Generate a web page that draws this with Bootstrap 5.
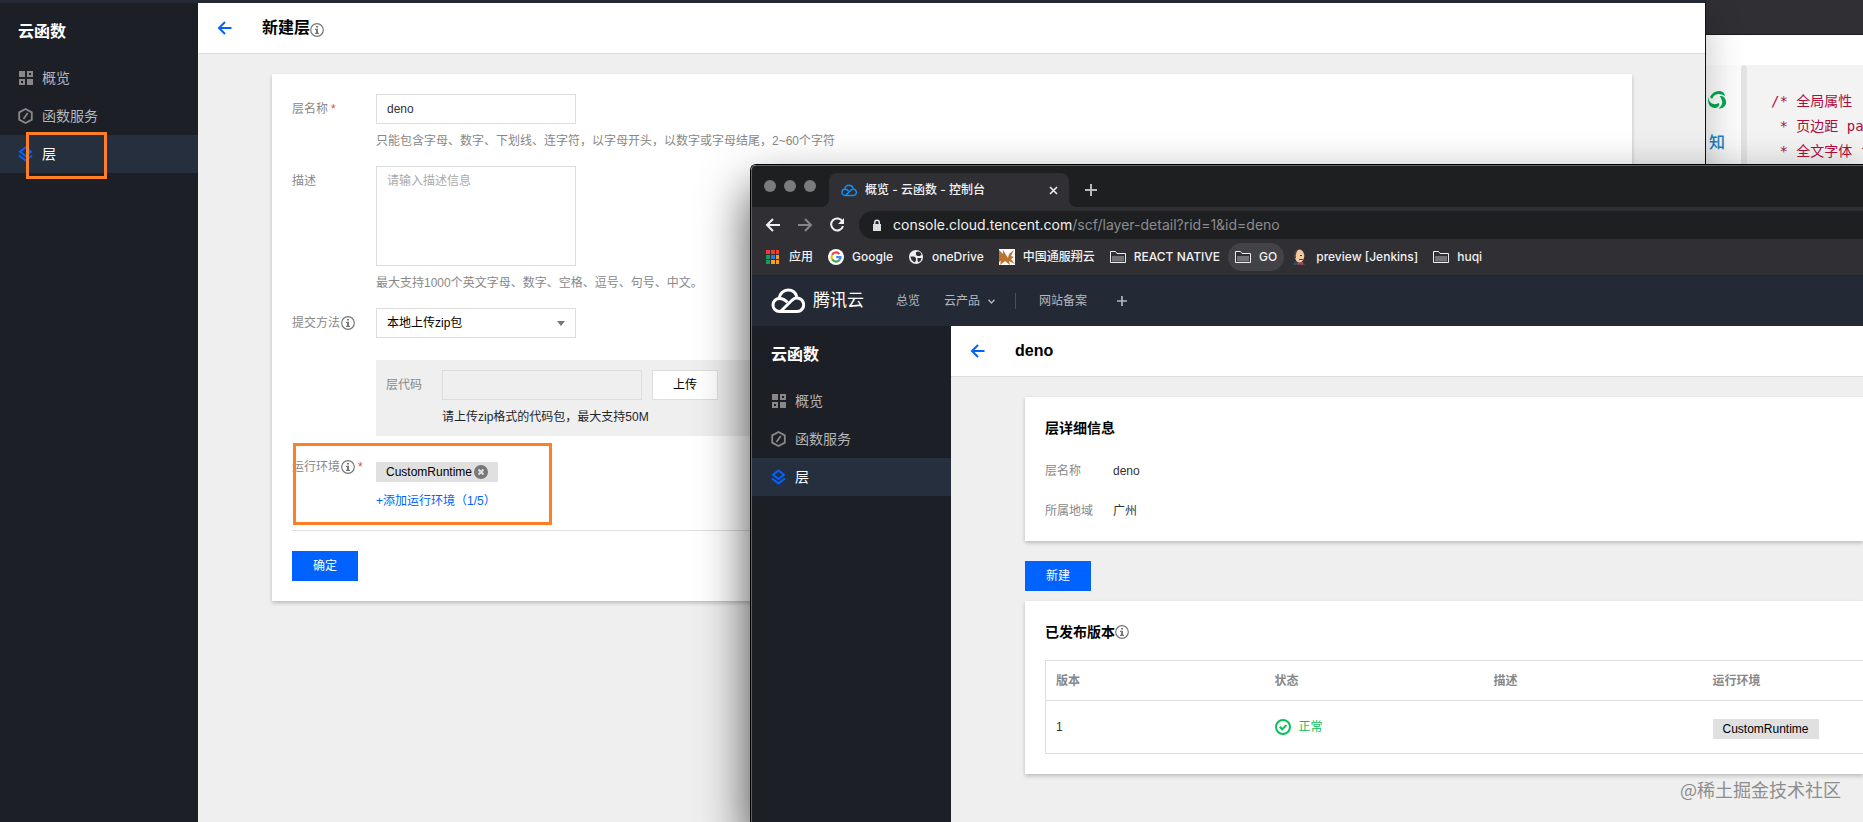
<!DOCTYPE html>
<html lang="zh-CN">
<head>
<meta charset="utf-8">
<meta name="viewport" content="width=device-width, initial-scale=1">
<title>云函数 - 控制台</title>
<link href="https://cdn.jsdelivr.net/npm/bootstrap@5.3.0/dist/css/bootstrap.min.css" rel="stylesheet">
<style>
  body { font: 12px/18px "Liberation Sans", "Noto Sans CJK SC", sans-serif; color: #333; background: #302f34; }
  .desktop { height: 100vh; }
  .win { position: absolute; overflow: hidden; display: flex; flex-direction: column; }
  /* the three windows on the desktop, back to front */
  .win-editor { left: 1706px; right: 0; top: 0; height: 200px; background: #fff; }
  .win-create { left: 0; right: 157px; top: 0; bottom: 0; border-right: 1px solid #111; border-top: 3px solid #232a35; box-shadow: 0 16px 36px rgba(0,0,0,.24); }
  .win-browser { left: 750px; right: 0; top: 164px; bottom: 0; border: solid #000; border-width: 1px 0 0 1px; border-radius: 6px 0 0 0; box-shadow: 0 25px 50px rgba(0,0,0,.72); }
  .rim { border: solid #5f6163; border-width: 1px 0 0 1px; border-radius: 5px 0 0 0; }

  .side { width: 198px; background: #1d1f27; padding-top: 13px; }
  .side h2 { font-size: 16px; line-height: 32px; font-weight: 700; color: #fff; margin: 0 0 11px; padding-left: 18px; }
  .side a { display: flex; align-items: center; gap: 9px; height: 38px; padding-left: 18px; font-size: 14px; color: #b5b6b9; text-decoration: none; }
  .side a.active { background: #262f3e; color: #fff; }
  .side svg { width: 15px; height: 16px; color: #888; }
  .side a.active svg { color: #0063ff; }
  .page { background: #efefef; }
  .page-head { height: 51px; background: #fff; border-bottom: 1px solid #ddd; padding-left: 19px; }
  .page-head h1 { font-size: 16px; line-height: 24px; font-weight: 700; color: #000; margin: 0 0 0 30px; }
  .panel { background: #fff; padding: 20px; box-shadow: 0 2px 4px rgba(0,0,0,.22); }
  .tip { width: 14px; height: 14px; color: #777; flex: none; }
  .lab { width: 84px; flex: none; line-height: 30px; color: #888; }
  .lab .tip { margin-left: 1px; }
  .req { color: #e54545; margin-left: 3px; }
  .box, .box:focus, .box:disabled { width: 200px; height: 30px; padding: 5px 10px; font-size: 12px; line-height: 18px; border: 1px solid #ddd; border-radius: 0; color: #333; background-color: #fff; }
  .box::placeholder { color: #aaa; }
  textarea.box, textarea.box:focus { height: 100px; resize: none; }
  select.box, select.box:focus { color: #000; background-image: url("data:image/svg+xml,%3csvg xmlns='http://www.w3.org/2000/svg' viewBox='0 0 8 5'%3e%3cpath fill='%23777' d='M0 0h8L4 5z'/%3e%3c/svg%3e"); background-size: 8px 5px; background-position: right 10px center; }
  .box:disabled { background-color: #efefef; }
  .help { margin-top: 8px; color: #888; }
  .upload { background: #efefef; padding: 10px; margin: 22px 0 16px 84px; }
  .upload .lab { width: 56px; }
  .act { width: 66px; height: 30px; padding: 0; font-size: 12px; border-radius: 0; border: 1px solid #ddd; background: #fff; color: #000; }
  .act-main { background: #0063ff; border-color: #0063ff; color: #fff; }
  .chip { display: inline-flex; align-items: center; height: 20px; padding: 0 10px; background: #e0e0e0; color: #000; }
  .chip button { border: 0; padding: 0; background: none; display: flex; margin-left: 2px; }
  .blue { color: #0063ff; text-decoration: none; }
  .rule { border-top: 1px solid #ddd; margin: 20px 0; }
  /* marker frames drawn over the form */
  .frame { position: absolute; border: 3px solid #ff7f27; pointer-events: none; }

  .chrome { font-family: Inter, "Noto Sans CJK SC", sans-serif; font-weight: 500; color: #f1f1f2; background: #302f34; }
  .tabs { height: 41px; background: #1e1f21; padding: 7px 0 0 18px; }
  .dot { width: 12px; height: 12px; border-radius: 50%; background: #7b7b7d; }
  .tab { position: relative; width: 240px; height: 34px; background: #302f34; border-radius: 8px 8px 0 0; padding: 0 11px 0 12px; margin-left: 13px; }
  .tab::before, .tab::after { content: ""; position: absolute; bottom: 0; width: 8px; height: 8px; }
  .tab::before { right: 100%; background: radial-gradient(circle at 0 0, transparent 8px, #302f34 8px); }
  .tab::after { left: 100%; background: radial-gradient(circle at 100% 0, transparent 8px, #302f34 8px); }
  .bar { height: 32px; padding: 4px 0 0 13px; }
  .omni { height: 28px; background: #1e1f21; border-radius: 14px 0 0 14px; margin-left: 14px; padding-left: 12px; font-size: 14px; font-weight: 400; }
  .omni .path { color: #8c8c8e; }
  .marks { height: 37px; padding-left: 13px; gap: 15px; border-bottom: 1px solid #252528; }
  .marks a { display: flex; align-items: center; gap: 8px; color: inherit; text-decoration: none; white-space: nowrap; }
  .marks a.hot { height: 28px; border-radius: 14px; background: #434246; padding: 0 7px; margin: 0 -7px; }
  .marks svg { width: 16px; height: 16px; }
  .topnav { height: 50px; background: #232a35; padding-left: 19px; }
  .topnav a { color: #b4b8be; text-decoration: none; }
  .topnav .brand { font-size: 17px; color: #fff; margin-right: 32px; }
  .sep { width: 1px; height: 16px; background: #4a515c; margin: 0 23px 0 20px; }
  .win-browser .side { width: 199px; }
  .win-browser .side h2, .win-browser .side a { padding-left: 19px; }
  .detail { padding: 20px 0 0 74px; }
  .panel h3 { font-size: 14px; line-height: 22px; font-weight: 700; color: #000; margin: 0; }
  .detail dt { width: 68px; font-weight: 400; color: #888; line-height: 20px; }
  .detail dd { margin: 0; line-height: 20px; }
  .versions { table-layout: fixed; width: 100%; border: solid #ddd; border-width: 1px 0 1px 1px; margin-top: 17px; }
  .versions th, .versions td { padding: 0 10px; }
  .versions th { height: 40px; color: #888; border-bottom: 1px solid #ddd; }
  .versions td { height: 53px; }
  .versions .w { width: 219px; }
  .ok { color: #0abf5b; }
  .stamp { position: absolute; right: 22px; bottom: 20px; font: 18px/26px "Noto Sans CJK SC", sans-serif; color: #8d8d8d; }

  .ed-top { height: 35px; background: #302f34; border-bottom: 1px solid #1c1c1e; }
  .ed-links { width: 35px; margin-top: 30px; padding: 26px 0 0 2px; background: #fbfbfb; }
  .ed-links a { color: #1a86c8; font-size: 16px; line-height: 24px; font-weight: 500; margin: 22px 0 0 1px; text-decoration: none; }
  .ed-grip { width: 6px; margin-top: 30px; background: #e3e3e3; border-radius: 3px 3px 0 0; }
  .code { margin: 30px 0 0; padding: 24px 0 0 24px; background: #f3f3f3; color: #b00c3a; font: 14px/25px "DejaVu Sans Mono", "Noto Sans CJK SC", monospace; overflow: hidden; }
</style>
</head>
<body>
<svg class="d-none" xmlns="http://www.w3.org/2000/svg">
  <symbol id="grid" viewBox="0 0 15 16"><path fill="currentColor" d="M1 1h6v6H1zM9 9h6v6H9z"/><path fill="none" stroke="currentColor" stroke-width="2" d="M10 2h4v4h-4zM2 10h4v4H2z"/></symbol>
  <symbol id="hex" viewBox="0 0 15 16"><path fill="none" stroke="currentColor" stroke-width="1.8" d="M7.500 1l6.300 3.400v7.200L7.500 15l-6.300-3.400V4.400z M9.700 5L5.500 11"/></symbol>
  <symbol id="layers" viewBox="0 0 15 16"><path fill="none" stroke="currentColor" stroke-width="2" d="M7.500 1.500l5.500 4.200L7.500 10 2 5.700zM1 9.500l6.500 4.900L14 9.500"/></symbol>
  <symbol id="info" viewBox="0 0 14 14"><circle cx="7" cy="7" r="6.300" fill="none" stroke="currentColor" stroke-width="1.200"/><path fill="currentColor" d="M6 3h2v1.600H6zM5 5.700h3v4h1V11H5V9.700h1V7H5z"/></symbol>
  <symbol id="back" viewBox="0 0 14 14"><path fill="none" stroke="currentColor" stroke-width="2" d="M7.500 1L1.500 7l6 6M1.500 7H14"/></symbol>
  <symbol id="cloud" viewBox="0 0 34 26"><g fill="none" stroke="currentColor" stroke-width="3"><path d="M9 23.500h17a6.700 6.700 0 1 0-4.500-11.700L10 23"/><path d="M16.500 14.500c-2-2.200-4.500-4-8-4a6.500 6.500 0 0 0 0 13H10"/><path d="M8 10.500C8.800 5.500 12.500 2 17 2c4.400 0 7.800 2.800 8.800 6.800"/></g></symbol>
  <symbol id="plus" viewBox="0 0 12 12"><path fill="none" stroke="currentColor" stroke-width="2" d="M6 0v12M0 6h12"/></symbol>
  <symbol id="folder" viewBox="0 0 16 16"><path fill="#302f34" stroke="#eee" d="M.5 13.500v-11h5l1.500 2h8.500v9z"/><path fill="#727275" d="M2 7h12v5.500H2z"/></symbol>
</svg>

<div class="desktop position-relative overflow-hidden">

  <section class="win win-editor">
    <div class="ed-top flex-shrink-0"></div>
    <div class="d-flex flex-fill">
      <div class="ed-links flex-shrink-0">
        <svg class="d-block" width="18" height="18" viewBox="0 0 18 18"><path fill="#00a854" d="M2 6Q5 0 11 0q5 0 6 5-5-3-9-1.500Q5 4.500 4.500 7.500 3 8 2 6zM16 6q4 5 .5 9.500Q14 18 10.500 17.500 15 14 14 10q-.5-3-2.500-5 3-.5 4.500 1zM0 6q1 5 4 6.500 3.500 1.500 7-.5 1 2-1 4-4 2.500-8-1Q-.5 11.500 0 6z"/></svg>
        <a href="#" class="d-block">知</a>
      </div>
      <div class="ed-grip flex-shrink-0"></div>
      <pre class="code flex-fill">/* 全局属性
 * 页边距 pa
 * 全文字体 f</pre>
    </div>
  </section>

  <section class="win win-create">
    <div class="d-flex flex-fill">
      <nav class="side flex-shrink-0">
        <h2>云函数</h2>
        <a href="#"><svg><use href="#grid"/></svg>概览</a>
        <a href="#"><svg><use href="#hex"/></svg>函数服务</a>
        <a href="#" class="active"><svg><use href="#layers"/></svg>层</a>
      </nav>
      <main class="page flex-fill">
        <header class="page-head d-flex align-items-center">
          <a href="#" class="blue d-flex" aria-label="返回"><svg width="15" height="14"><use href="#back"/></svg></a>
          <h1>新建层</h1><svg class="tip mt-1"><use href="#info"/></svg>
        </header>
        <form class="panel" style="margin:20px 73px 0 74px">
          <div class="d-flex mb-3">
            <label class="lab" for="layer-name">层名称<span class="req">*</span></label>
            <div>
              <input id="layer-name" class="form-control box" type="text" value="deno">
              <div class="help">只能包含字母、数字、下划线、连字符，以字母开头，以数字或字母结尾，2~60个字符</div>
            </div>
          </div>
          <div class="d-flex mb-3">
            <label class="lab" for="layer-desc">描述</label>
            <div>
              <textarea id="layer-desc" class="form-control box" placeholder="请输入描述信息"></textarea>
              <div class="help">最大支持1000个英文字母、数字、空格、逗号、句号、中文。</div>
            </div>
          </div>
          <div class="d-flex">
            <label class="lab d-flex align-items-center" for="layer-way">提交方法<svg class="tip"><use href="#info"/></svg></label>
            <select id="layer-way" class="form-select box"><option>本地上传zip包</option></select>
          </div>
          <div class="upload d-flex">
            <label class="lab" for="layer-code">层代码</label>
            <div>
              <div class="d-flex" style="gap:10px">
                <input id="layer-code" class="form-control box" type="text" disabled>
                <button type="button" class="btn act">上传</button>
              </div>
              <div class="help text-body">请上传zip格式的代码包，最大支持50M</div>
            </div>
          </div>
          <div class="d-flex">
            <div class="lab d-flex align-items-center align-self-start">运行环境<svg class="tip"><use href="#info"/></svg><span class="req">*</span></div>
            <div class="d-flex flex-column align-items-start" style="gap:10px;padding-top:10px">
              <span class="chip">CustomRuntime<button type="button" aria-label="移除"><svg width="14" height="14" viewBox="0 0 14 14"><circle cx="7" cy="7" r="7" fill="#777"/><path stroke="#e0e0e0" stroke-width="2" d="M4.500 4.500l5 5M9.500 4.500l-5 5"/></svg></button></span>
              <a href="#" class="blue">+添加运行环境（1/5）</a>
            </div>
          </div>
          <div class="rule"></div>
          <button type="button" class="btn act act-main d-block">确定</button>
        </form>
      </main>
    </div>
  </section>
  <div class="frame" style="left:26px;top:132px;width:81px;height:47px"></div>
  <div class="frame" style="left:293px;top:443px;width:259px;height:82px"></div>

  <section class="win win-browser">
    <div class="rim d-flex flex-column flex-fill overflow-hidden">
      <div class="chrome">
        <div class="tabs d-flex">
          <div class="d-flex" style="gap:8px;margin:7px 0 0 -6px"><i class="dot"></i><i class="dot"></i><i class="dot"></i></div>
          <div class="tab d-flex align-items-center">
            <svg width="16" height="13" class="me-2" style="color:#1193f5"><use href="#cloud"/></svg>
            <span class="flex-fill text-nowrap">概览 - 云函数 - 控制台</span>
            <svg width="9" height="9" viewBox="0 0 9 9"><path stroke="#eee" stroke-width="1.600" d="M1 1l7 7M8 1L1 8"/></svg>
          </div>
          <svg width="12" height="12" style="margin:11px 0 0 16px;color:#bbb"><use href="#plus"/></svg>
        </div>
        <div class="bar d-flex align-items-center">
          <svg width="16" height="14" viewBox="0 0 16 14"><path fill="none" stroke="#f1f1f2" stroke-width="2" d="M8 1L2 7l6 6M2 7h13"/></svg>
          <svg width="16" height="14" viewBox="0 0 16 14" style="margin-left:16px"><path fill="none" stroke="#858587" stroke-width="2" d="M8 1l6 6-6 6M14 7H1"/></svg>
          <svg width="16" height="16" viewBox="0 0 16 16" style="margin-left:16px"><path fill="none" stroke="#f1f1f2" stroke-width="2" d="M13.500 4.600A6 6 0 1 0 14 9"/><path fill="#f1f1f2" d="M15 1v6H9z"/></svg>
          <div class="omni flex-fill d-flex align-items-center">
            <svg width="12" height="13" viewBox="0 0 12 13"><path fill="#ddd" d="M2 5h8v7H2z"/><path fill="none" stroke="#ddd" stroke-width="1.500" d="M3.700 5V3.500a2.300 2.300 0 0 1 4.600 0V5"/></svg>
            <span style="padding-left:10px">console.cloud.tencent.com<span class="path">/scf/layer-detail?rid=1&amp;id=deno</span></span>
          </div>
        </div>
        <div class="marks d-flex align-items-center">
          <a href="#"><svg viewBox="0 0 16 16"><path fill="#f33b30" d="M1 1h4v4H1zM6 1h4v4H6zM11 1h3v4h-3z"/><path fill="#0f9d58" d="M1 6h4v4H1zM1 11h4v4H1z"/><path fill="#1a7cf0" d="M6 6h4v4H6z"/><path fill="#f9a01b" d="M11 6h3v4h-3zM6 11h4v4H6zM11 11h3v4h-3z"/></svg>应用</a>
          <a href="#"><svg viewBox="0 0 16 16"><circle cx="8" cy="8" r="8" fill="#fff"/><g fill="none" stroke-width="2.200"><path stroke="#ea4335" d="M4.100 5.700A4.500 4.500 0 0 1 11.300 4.900"/><path stroke="#fbbc05" d="M4.100 5.700a4.500 4.500 0 0 0 0 4.600"/><path stroke="#34a853" d="M4.100 10.300a4.500 4.500 0 0 0 6.900 1.100"/><path stroke="#4285f4" d="M11 11.400A4.500 4.500 0 0 0 12.500 8.200H8.200"/></g></svg>Google</a>
          <a href="#"><svg viewBox="0 0 16 16"><circle cx="8" cy="8" r="7" fill="#eee"/><path fill="#302f34" d="M2.500 7.500h3.500l2 1.500v2l-1 2.500Q3 12 2.500 7.500zM8 3l3-.6q2 1.100 2.600 3.100L12 7H9.500L8 6zM9.500 9h4q-.3 3-3 4.300L9.500 11.500z"/></svg>oneDrive</a>
          <a href="#"><svg viewBox="0 0 16 16"><path fill="#fff" d="M0 0h16v16H0z"/><path fill="#b9742f" d="M0 1l4 4 0-4 5 8 1-4 5-4-3 6 3 1-3 2 4 5-6-3 1 4-5-4-5 4 1-4-2 1z"/></svg>中国通服翔云</a>
          <a href="#"><svg><use href="#folder"/></svg>REACT NATIVE</a>
          <a href="#" class="hot"><svg><use href="#folder"/></svg>GO</a>
          <a href="#"><svg viewBox="0 0 16 16"><path fill="#28526b" d="M1 16q1-4 6-4t6 4z"/><ellipse cx="7.500" cy="7" rx="4.800" ry="6.500" fill="#eec9a2"/><path fill="#4d4339" d="M3 9Q0 2 6 .7 3 4 4 9zM8 6h2v1H8zM7 10h4v1H7z"/><path fill="#d33833" d="M6 13l2 1 3-1v3l-3-1-2 1z"/></svg>preview [Jenkins]</a>
          <a href="#"><svg><use href="#folder"/></svg>huqi</a>
        </div>
      </div>
      <nav class="topnav d-flex align-items-center flex-shrink-0">
        <a href="#" class="brand d-flex align-items-center gap-2"><svg width="34" height="26"><use href="#cloud"/></svg>腾讯云</a>
        <a href="#">总览</a>
        <a href="#" class="ms-4">云产品<svg class="ms-2" width="7" height="5" viewBox="0 0 7 5"><path fill="none" stroke="currentColor" stroke-width="1.300" d="M.5.800L3.500 4l3-3.200"/></svg></a>
        <i class="sep"></i>
        <a href="#">网站备案</a>
        <a href="#" class="d-flex" style="margin-left:30px" aria-label="添加"><svg width="10" height="10"><use href="#plus"/></svg></a>
      </nav>
      <div class="d-flex flex-fill">
        <nav class="side flex-shrink-0">
          <h2>云函数</h2>
          <a href="#"><svg><use href="#grid"/></svg>概览</a>
          <a href="#"><svg><use href="#hex"/></svg>函数服务</a>
          <a href="#" class="active"><svg><use href="#layers"/></svg>层</a>
        </nav>
        <main class="page flex-fill">
          <header class="page-head d-flex align-items-center">
            <a href="#" class="blue d-flex" aria-label="返回"><svg width="15" height="14"><use href="#back"/></svg></a>
            <h1>deno</h1>
          </header>
          <div class="detail">
            <div class="panel">
              <h3>层详细信息</h3>
              <dl class="mb-0" style="padding-top:22px">
                <div class="d-flex" style="margin-bottom:20px"><dt>层名称</dt><dd>deno</dd></div>
                <div class="d-flex"><dt>所属地域</dt><dd>广州</dd></div>
              </dl>
            </div>
            <button type="button" class="btn act act-main d-block" style="margin:20px 0 10px">新建</button>
            <div class="panel pe-0">
              <h3 class="d-flex align-items-center">已发布版本<svg class="tip"><use href="#info"/></svg></h3>
              <table class="versions">
                <thead><tr><th class="w">版本</th><th class="w">状态</th><th class="w">描述</th><th>运行环境</th></tr></thead>
                <tbody><tr>
                  <td>1</td>
                  <td><span class="ok d-flex align-items-center gap-2"><svg width="16" height="16" viewBox="0 0 16 16"><g fill="none" stroke="currentColor" stroke-width="2"><circle cx="8" cy="8" r="7"/><path d="M4.700 7.800l2.500 2.500 4.200-4.200"/></g></svg>正常</span></td>
                  <td></td>
                  <td><span class="chip mt-1">CustomRuntime</span></td>
                </tr></tbody>
              </table>
            </div>
          </div>
        </main>
      </div>
    </div>
  </section>
  <div class="stamp">@稀土掘金技术社区</div>
</div>
<script src="https://cdn.jsdelivr.net/npm/bootstrap@5.3.0/dist/js/bootstrap.bundle.min.js"></script>
</body>
</html>
